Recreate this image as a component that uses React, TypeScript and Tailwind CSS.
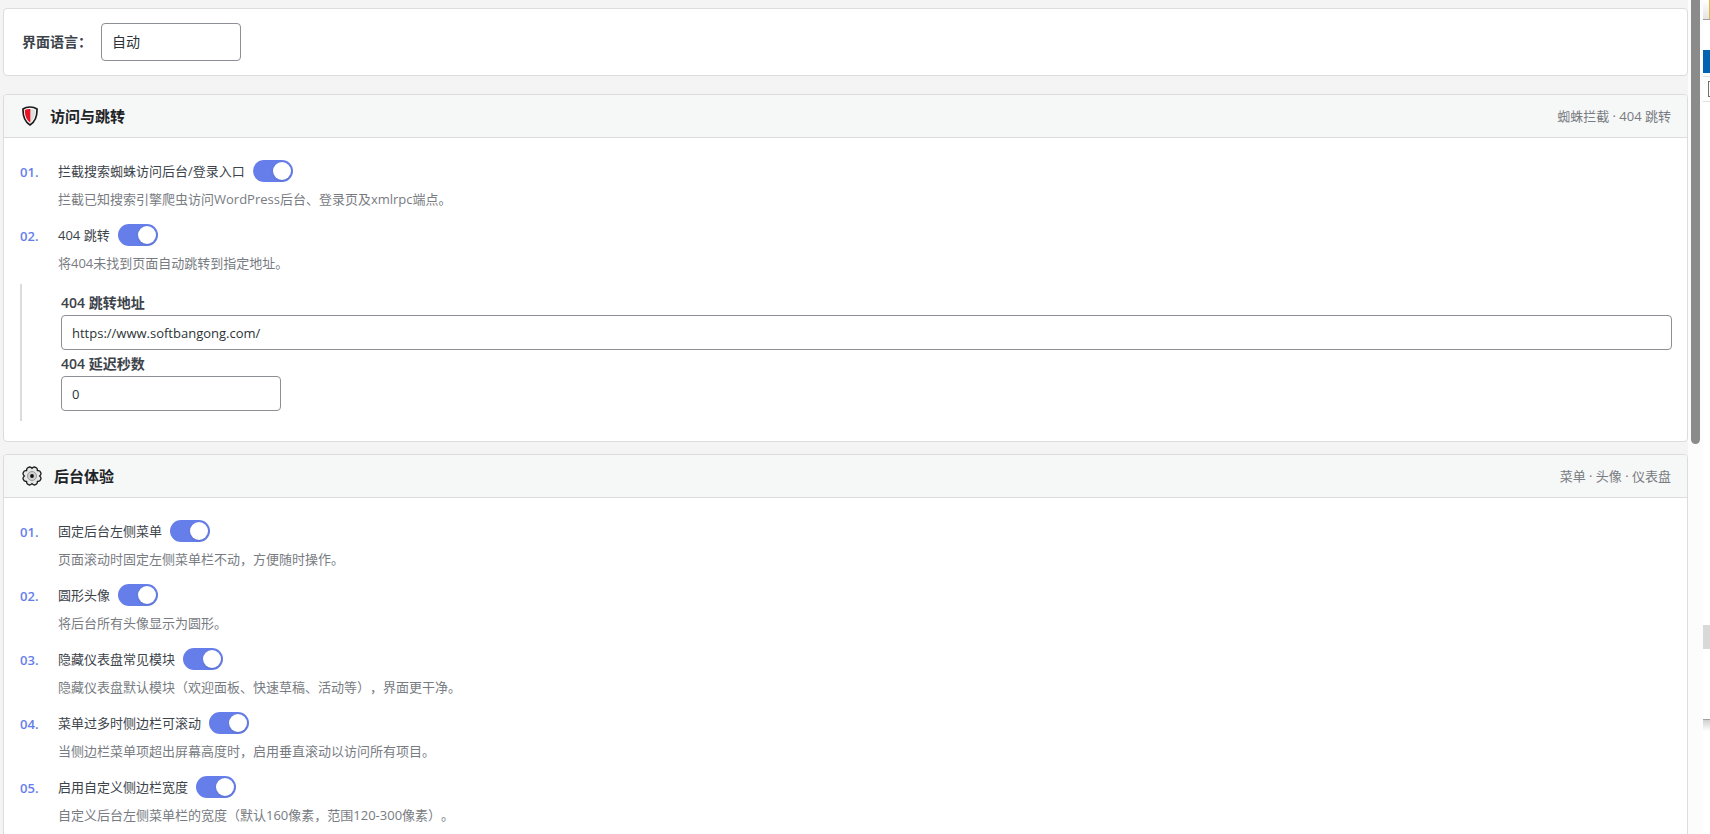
import { useState } from 'react';
import type { ReactNode } from 'react';

type Feature = {
    id: string;
    label: string;
    description: string;
};

const accessFeatures: Feature[] = [
    {
        id: 'block-spiders',
        label: '拦截搜索蜘蛛访问后台/登录入口',
        description: '拦截已知搜索引擎爬虫访问WordPress后台、登录页及xmlrpc端点。',
    },
    {
        id: 'redirect-404',
        label: '404 跳转',
        description: '将404未找到页面自动跳转到指定地址。',
    },
];

const adminFeatures: Feature[] = [
    {
        id: 'sticky-menu',
        label: '固定后台左侧菜单',
        description: '页面滚动时固定左侧菜单栏不动，方便随时操作。',
    },
    {
        id: 'round-avatar',
        label: '圆形头像',
        description: '将后台所有头像显示为圆形。',
    },
    {
        id: 'hide-widgets',
        label: '隐藏仪表盘常见模块',
        description: '隐藏仪表盘默认模块（欢迎面板、快速草稿、活动等），界面更干净。',
    },
    {
        id: 'scroll-menu',
        label: '菜单过多时侧边栏可滚动',
        description: '当侧边栏菜单项超出屏幕高度时，启用垂直滚动以访问所有项目。',
    },
    {
        id: 'menu-width',
        label: '启用自定义侧边栏宽度',
        description: '自定义后台左侧菜单栏的宽度（默认160像素，范围120-300像素）。',
    },
];

const inputClass = 'block h-[35px] rounded border border-[#8c8f94] bg-white px-2.5 text-[13px] text-[#2c3338] outline-none focus:border-[#2271b1]';

function ShieldIcon() {
    return (
        <svg width="16" height="20" viewBox="0 0 16 20" aria-hidden="true">
            <path d="M8 1C5.4 1 3 1.6 1 3C.8 9.5 2.4 15.5 8 19C13.6 15.5 15.2 9.5 15 3C13 1.6 10.6 1 8 1Z" fill="#fff" stroke="#1a1a1a" strokeWidth="1.7" strokeLinejoin="round" />
            <path d="M8 3C10 3 11.8 3.3 13.2 4.1C13.2 9.3 11.9 13.9 8 16.8Z" fill="#dedede" />
            <path d="M8.300 3C6 3 4.200 3.300 2.800 4.100C2.800 9.300 4.100 13.900 8.300 16.800Z" fill="#e81224" />
        </svg>
    );
}

function GearIcon() {
    return (
        <svg width="20" height="20" viewBox="0 0 20 20" aria-hidden="true">
            <path
                d="M10 2.5A2.9 2.9 0 0 1 15.3 4.7A2.9 2.9 0 0 1 17.5 10A2.9 2.9 0 0 1 15.3 15.3A2.9 2.9 0 0 1 10 17.5A2.9 2.9 0 0 1 4.7 15.3A2.9 2.9 0 0 1 2.5 10A2.9 2.9 0 0 1 4.7 4.7A2.9 2.9 0 0 1 10 2.5Z"
                fill="#e6e6e6"
                stroke="#1a1a1a"
                strokeWidth="1.3"
                strokeLinejoin="round"
            />
            <circle cx="10" cy="10" r="4.5" fill="#d0d0d0" stroke="#9a9a9a" strokeWidth="1" />
            <circle cx="10" cy="10" r="1.9" fill="#111" />
        </svg>
    );
}

function FeatureRow({ feature, index }: { feature: Feature; index: number }) {
    const [enabled, setEnabled] = useState(true);

    return (
        <li className="flex h-16">
            <span className="w-[38px] shrink-0 text-[13px] font-semibold leading-6 text-[#667eea]">
                {String(index + 1).padStart(2, '0')}.
            </span>
            <div className="min-w-0">
                <label htmlFor={feature.id} className="flex items-center gap-2 text-[13px] leading-[22px] text-[#3c434a]">
                    {feature.label}
                    <input
                        id={feature.id}
                        type="checkbox"
                        role="switch"
                        checked={enabled}
                        onChange={e => setEnabled(e.target.checked)}
                        className="h-[22px] w-10 shrink-0 appearance-none rounded-full bg-[#ccc] p-0.5 before:block before:size-[18px] before:rounded-full before:bg-white before:shadow-sm before:content-[''] checked:bg-[#667eea] checked:before:translate-x-[18px]"
                    />
                </label>
                <p className="mt-1.5 text-[13px] leading-[22px] text-[#787c82]">{feature.description}</p>
            </div>
        </li>
    );
}

function Section({ icon, title, hint, features, children }: {
    icon: ReactNode;
    title: string;
    hint: string;
    features: Feature[];
    children?: ReactNode;
}) {
    return (
        <section className="rounded border border-[#dcdcde] bg-white">
            <header className="flex h-[43px] items-center gap-3 rounded-t border-b border-[#dcdcde] bg-[#f6f7f7] pr-4 pl-[18px]">
                {icon}
                <h2 className="text-[15px] font-semibold text-[#1d2327]">{title}</h2>
                <span className="ml-auto text-[13px] leading-6 text-[#787c82]">{hint}</span>
            </header>
            <div className="pt-[22px] pr-[15px] pb-5 pl-4">
                <ul>
                    {features.map((f, i) => <FeatureRow key={f.id} feature={f} index={i} />)}
                </ul>
                {children}
            </div>
        </section>
    );
}

export default function App() {
    const [url, setUrl] = useState('https://www.softbangong.com/');
    const [delay, setDelay] = useState('0');

    return (
        <div className="flex h-screen overflow-hidden bg-[#f4f4f4] font-['Open_Sans','Noto_Sans_CJK_SC',sans-serif] [text-spacing-trim:space-all]">
            <main className="min-w-0 flex-1 overflow-hidden pt-2 pl-[3px]">
                <div className="mb-[18px] flex h-[68px] items-center gap-[9px] rounded border border-[#dcdcde] bg-white px-[18px]">
                    <label htmlFor="language" className="text-sm font-semibold text-[#3c434a]">界面语言：</label>
                    <select
                        id="language"
                        className="h-[38px] w-[140px] appearance-none rounded border border-[#8c8f94] bg-white px-2.5 text-sm text-[#2c3338]"
                    >
                        <option>自动</option>
                    </select>
                </div>

                <div className="flex flex-col gap-3">
                    <Section icon={<ShieldIcon />} title="访问与跳转" hint="蜘蛛拦截 · 404 跳转" features={accessFeatures}>
                        <div className="-mt-1 border-l-2 border-[#dcdcde] pt-[7px] pb-2.5 pl-[39px]">
                            <label htmlFor="redirect-url" className="block text-sm font-semibold leading-6 text-[#3c434a]">404 跳转地址</label>
                            <input id="redirect-url" type="text" value={url} onChange={e => setUrl(e.target.value)} className={`${inputClass} w-full`} />
                            <label htmlFor="redirect-delay" className="mt-0.5 block text-sm font-semibold leading-6 text-[#3c434a]">404 延迟秒数</label>
                            <input id="redirect-delay" type="text" inputMode="numeric" value={delay} onChange={e => setDelay(e.target.value)} className={`${inputClass} w-[220px]`} />
                        </div>
                    </Section>
                    <Section icon={<GearIcon />} title="后台体验" hint="菜单 · 头像 · 仪表盘" features={adminFeatures} />
                </div>
            </main>

            {/* scrollbar */}
            <div className="w-[15px] shrink-0 bg-[#fcfcfc] pl-[3px]">
                <div className="h-[444px] w-[9px] rounded-b-full bg-[#8b8b8b]" />
            </div>

            {/* edge of the neighbouring window */}
            <div className="w-[7px] shrink-0 overflow-hidden bg-white">
                <div className="flex h-5 justify-end border-b border-[#a0a0a0] bg-linear-to-b from-white to-[#e4e4e4]">
                    <div className="w-px bg-[#e3b93c]" />
                </div>
                <div className="mt-[30px] h-[23px] bg-[#0063b1]" />
                <div className="mt-[3px] flex h-[26px] items-center border-y border-[#e0e0e0] pl-[5px]">
                    <div className="h-4 w-4 shrink-0 border border-[#707070]" />
                </div>
                <div className="mt-[523px] h-6 bg-[#d9d9d9]" />
                <div className="mt-[70px] h-3 border-t border-[#a0a0a0] bg-linear-to-b from-[#d0d0d0] to-white" />
            </div>
        </div>
    );
}
